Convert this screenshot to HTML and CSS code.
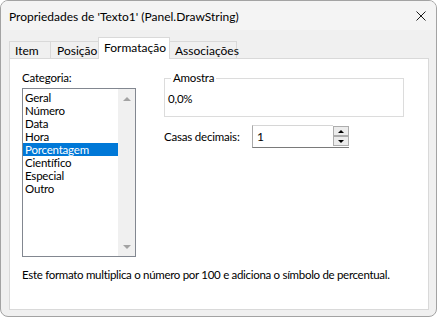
FILE: index.html
```html
<!DOCTYPE html>
<html lang="pt">
<head>
    <meta charset="UTF-8">
    <title>Propriedades de 'Texto1'</title>
    <link rel="stylesheet" href="styles.css">
</head>
<body>
    <div class="window">
        <div class="titlebar">
            <span class="title">Propriedades de 'Texto1' (Panel.DrawString)</span>
            <svg class="close" width="10" height="10" viewBox="0 0 10 10">
                <path d="M0.5 0.5 L9.5 9.5 M9.5 0.5 L0.5 9.5" stroke="#1b1b1b" stroke-width="1" fill="none"/>
            </svg>
        </div>

        <div class="tabs">
            <div class="tab tab-item">Item</div>
            <div class="tab tab-posicao">Posição</div>
            <div class="tab tab-formatacao active">Formatação</div>
            <div class="tab tab-associacoes">Associações</div>
        </div>

        <div class="panel">
            <div class="columns">
                <div class="left-col">
                    <div class="field-label">Categoria:</div>
                    <div class="listbox">
                        <ul class="list-items">
                            <li>Geral</li>
                            <li>Número</li>
                            <li>Data</li>
                            <li>Hora</li>
                            <li class="selected">Porcentagem</li>
                            <li>Científico</li>
                            <li>Especial</li>
                            <li>Outro</li>
                        </ul>
                        <div class="scrollbar">
                            <span class="arrow arrow-up"></span>
                            <span class="arrow arrow-down"></span>
                        </div>
                    </div>
                </div>

                <div class="right-col">
                    <fieldset class="sample">
                        <legend>Amostra</legend>
                        <div class="sample-value">0,0%</div>
                    </fieldset>

                    <div class="decimals">
                        <label for="decimals">Casas decimais:</label>
                        <div class="spinbox">
                            <input type="text" id="decimals" value="1">
                            <div class="spin">
                                <span class="spin-btn"><span class="tri tri-up"></span></span>
                                <span class="spin-btn"><span class="tri tri-down"></span></span>
                            </div>
                        </div>
                    </div>
                </div>
            </div>

            <p class="description">Este formato multiplica o número por 100 e adiciona o símbolo de percentual.</p>
        </div>
    </div>
</body>
</html>
```

FILE: styles.css
```css
body {
    margin: 0;
    background-color: #fff;
    font-family: "Lato", "Noto Sans", sans-serif;
    font-size: 12px;
    color: #000;
}

.window {
    box-sizing: border-box;
    width: 437px;
    height: 317px;
    border: 1px solid #a3a3a3;
    border-radius: 8px;
    background-color: #f0f0f0;
    overflow: hidden;
    display: flex;
    flex-direction: column;
}

/* title bar */
.titlebar {
    height: 29px;
    display: flex;
    align-items: center;
    justify-content: space-between;
    padding: 0 10px 0 8px;
    background-color: #f4f4f4;
}

.title {
    line-height: 14px;
    margin-top: 2px;
}

.close {
    display: block;
}

/* tabs */
.tabs {
    height: 28px;
    display: flex;
    align-items: flex-end;
    padding-left: 8px;
}

.tab {
    box-sizing: border-box;
    height: 17px;
    padding: 1px 0 0 5px;
    border: 1px solid #d9d9d9;
    border-bottom: none;
    background-color: #f0f0f0;
    line-height: 16px;
    white-space: nowrap;
    margin-left: -1px;
}

.tab:first-child {
    margin-left: 0;
}

.tab-item { width: 42px; }
.tab-posicao { width: 49px; padding-left: 6px; }
.tab-formatacao { width: 72px; }
.tab-associacoes { width: 68px; }

.tab.active {
    height: 22px;
    margin-bottom: -1px;
    padding-top: 1px;
    background-color: #fff;
    line-height: 18px;
    position: relative;
    z-index: 1;
}

/* main panel */
.panel {
    box-sizing: border-box;
    width: 420px;
    height: 252px;
    margin-left: 8px;
    padding: 12px 12px 0 12px;
    border: 1px solid #d9d9d9;
    background-color: #fff;
    font-size: 11.5px;
    letter-spacing: -0.2px;
}

.columns {
    display: flex;
    gap: 28px;
}

.left-col {
    width: 114px;
}

.field-label {
    line-height: 14px;
}

.listbox {
    box-sizing: border-box;
    height: 169px;
    margin-top: 3px;
    border: 1px solid #828790;
    display: flex;
}

.list-items {
    flex: 1;
    margin: 0;
    padding: 2px 0 0 0;
    list-style: none;
}

.list-items li {
    height: 13px;
    line-height: 13px;
    padding-left: 2px;
    white-space: nowrap;
}

.list-items li.selected {
    background-color: #0078d7;
    color: #fff;
}

.scrollbar {
    width: 17px;
    background-color: #f0f0f0;
    display: flex;
    flex-direction: column;
    justify-content: space-between;
    align-items: center;
    padding: 8px 0 7px 0;
}

.arrow {
    width: 0;
    height: 0;
    border-left: 4px solid transparent;
    border-right: 4px solid transparent;
}

.arrow-up {
    border-bottom: 4px solid #a3a3a3;
}

.arrow-down {
    border-top: 4px solid #a3a3a3;
}

/* right side */
.right-col {
    width: 240px;
}

.sample {
    box-sizing: border-box;
    height: 46px;
    margin: 0;
    padding: 0 4px 0 3px;
    border: 1px solid #dcdcdc;
}

.sample legend {
    margin-left: 3px;
    padding: 0 2px;
    line-height: 14px;
}

.sample-value {
    margin-top: 7px;
    line-height: 14px;
}

.decimals {
    display: flex;
    align-items: center;
    margin-top: 8px;
}

.decimals label {
    width: 88px;
    line-height: 14px;
    white-space: nowrap;
}

.spinbox {
    display: flex;
    height: 23px;
}

.spinbox input {
    box-sizing: border-box;
    width: 81px;
    height: 23px;
    margin: 0;
    padding: 0 0 0 4px;
    border: 1px solid #d6d6d6;
    border-left-color: #a9a9a9;
    border-bottom-color: #7a7a7a;
    border-right: none;
    font-family: inherit;
    font-size: 12px;
    outline: none;
}

.spin {
    box-sizing: border-box;
    width: 16px;
    height: 23px;
    padding: 1px 0;
    border-bottom: 1px solid #7a7a7a;
    display: flex;
    flex-direction: column;
}

.spin-btn {
    box-sizing: border-box;
    height: 10px;
    border: 1px solid #adadad;
    background-color: #ececec;
    display: flex;
    align-items: center;
    justify-content: center;
}

.tri {
    width: 0;
    height: 0;
    border-left: 3px solid transparent;
    border-right: 3px solid transparent;
}

.tri-up {
    border-bottom: 3px solid #000;
}

.tri-down {
    border-top: 3px solid #000;
}

.description {
    margin: 11px 0 0 0;
    line-height: 14px;
    letter-spacing: -0.3px;
    white-space: nowrap;
}
```
